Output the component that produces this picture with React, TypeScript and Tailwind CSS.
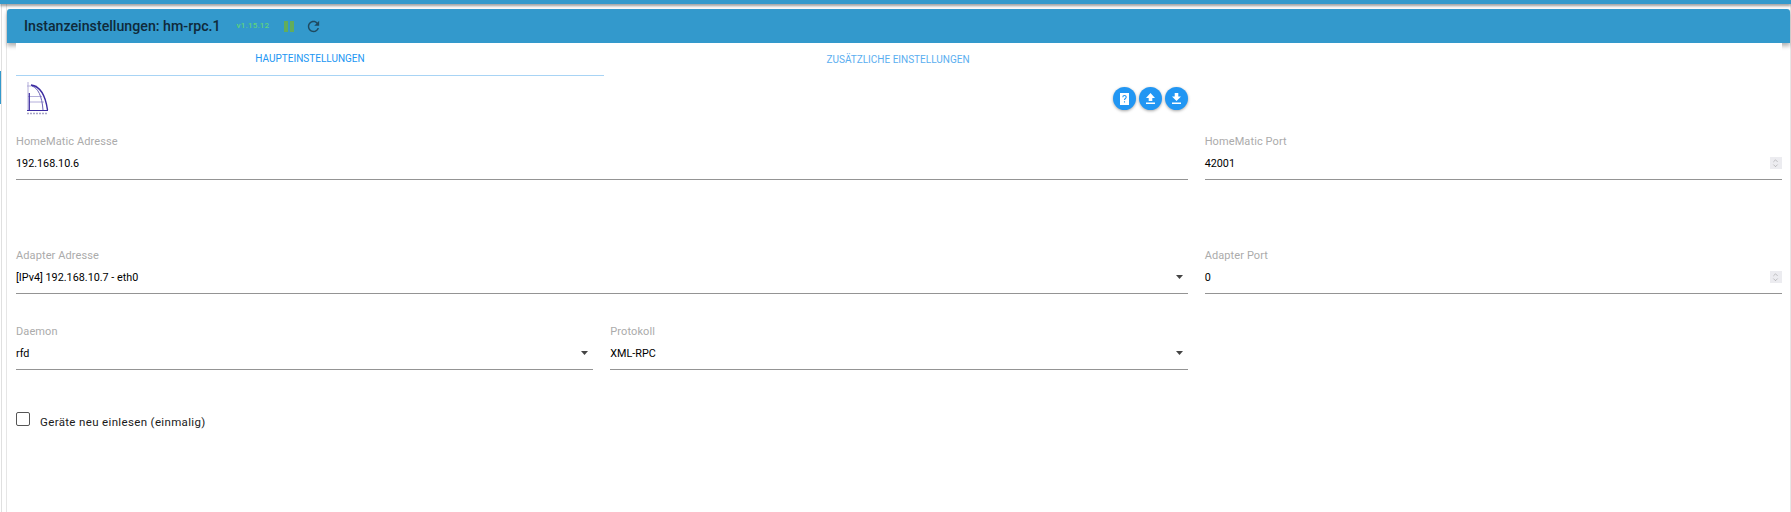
import { ChevronDown, ChevronUp } from 'lucide-react';

const font = { fontFamily: 'Roboto, sans-serif' };

function Caret() {
  return (
    <svg width="7" height="4" viewBox="0 0 7 4" className="absolute right-[5px] top-[5px] text-[#444]">
      <path d="M0 0h7L3.5 4z" fill="currentColor" />
    </svg>
  );
}

function Spinner() {
  return (
    <span className="absolute right-0 top-[1px] flex h-[12px] w-[12px] flex-col items-center justify-center bg-[#ececf0] text-[#777]">
      <ChevronUp size={9} strokeWidth={1.3} className="-mb-[3px]" />
      <ChevronDown size={9} strokeWidth={1.3} />
    </span>
  );
}

function Field({ label, value, select, spin, className }: { label: string; value: string; select?: boolean; spin?: boolean; className?: string }) {
  return (
    <div className={className}>
      <div className="h-[13px] text-[11px] leading-[13px] tracking-[0.1px] text-[#ababab]">{label}</div>
      <div className="relative mt-[8px] h-[24px] border-b border-b-[#949494] text-[10.8px] leading-[15px] text-black">
        {value}
        {select && <Caret />}
        {spin && <Spinner />}
      </div>
    </div>
  );
}

export default function App() {
  return (
    <div className="h-[512px] w-[1791px] overflow-hidden bg-white" style={font}>
      {/* Top bar */}
      <div className="relative z-10 h-[4px] bg-[#3399cc] shadow-[0_2px_3px_rgba(0,0,0,0.4)]" />

      <div className="flex h-[508px]">
        {/* Left rail */}
        <div className="w-[2px] border-r border-r-[#e0e0e0] pt-[67px]">
          <div className="h-[33px] w-[1px] bg-[#3399cc]" />
        </div>

        <div className="ml-[4px] w-[1785px] border-x border-x-[#e6e6e6] pt-[5px]">
          {/* Header */}
          <div className="flex h-[34px] w-[1783px] items-center rounded-t-[3px] bg-[#3399cc] pl-[17px] shadow-[0_3px_4px_rgba(0,0,0,0.3)]">
            <span className="text-[14.2px] font-medium leading-none text-[#0f2a3a]">Instanzeinstellungen: hm-rpc.1</span>
            <span className="ml-[16px] text-[8px] font-medium tracking-[0.2px] text-[#5fd37b]">v1.15.12</span>
            <span className="ml-[15px] flex gap-[2px]">
              <span className="h-[11px] w-[4px] bg-[#62ad5c]" />
              <span className="h-[11px] w-[4px] bg-[#62ad5c]" />
            </span>
            <svg width="17" height="17" viewBox="0 0 24 24" className="ml-[11px] text-[#1f4a60]">
              <path
                fill="currentColor"
                d="M17.65 6.35C16.2 4.9 14.21 4 12 4c-4.42 0-7.99 3.58-7.99 8s3.57 8 7.99 8c3.73 0 6.84-2.55 7.73-6h-2.08c-.82 2.33-3.04 4-5.65 4-3.31 0-6-2.69-6-6s2.69-6 6-6c1.66 0 3.14.69 4.22 1.78L13 11h7V4l-2.35 2.35z"
              />
            </svg>
          </div>

          {/* Card */}
          <div className="relative ml-[9px] h-[469px] w-[1766px] bg-white">
            {/* Tabs */}
            <div className="flex h-[33px] w-[1176px] text-[10px]">
              <div className="flex w-[588px] items-center justify-center border-b border-b-[#a8d4f5] leading-none text-[#2196f3]">HAUPTEINSTELLUNGEN</div>
              <div className="flex w-[588px] items-center justify-center leading-none text-[#5aaef0]">ZUSÄTZLICHE EINSTELLUNGEN</div>
            </div>

            {/* Logo + action buttons */}
            <div className="flex h-[47px] w-[1172px] items-start justify-between">
              <svg width="26" height="36" viewBox="0 0 26 36" className="ml-[8px] mt-[4px]">
                <g fill="none" stroke="#aaa5d6" strokeWidth="0.9">
                  <path d="M4 2v28M3 6h10M4 16.5h14M5 22h15" />
                </g>
                <path d="M8 6c6 2 10 10 11 24" fill="none" stroke="#6a60b8" strokeWidth="1" />
                <path d="M7 5c7 1 14 7 16.5 25" fill="none" stroke="#3a2aa0" strokeWidth="1.4" />
                <path d="M5.3 13v17" stroke="#3a2aa0" strokeWidth="1.2" />
                <path d="M3 30.5h21" stroke="#3a2aa0" strokeWidth="1" />
                <path d="M3 33.5h21" stroke="#a9a6c8" strokeWidth="1.4" strokeDasharray="2 1" />
              </svg>
              <div className="mt-[11px] flex gap-[3px]">
                <span className="flex h-[23px] w-[23px] items-center justify-center rounded-full bg-[#2196f3] shadow-[0_1px_3px_rgba(0,0,0,0.35)]">
                  <svg width="11" height="12" viewBox="0 0 11 12">
                    <path d="M1 0h9v12H1z" fill="#fff" />
                    <path d="M3.8 4.2c0-2.2 3.4-2.2 3.4 0 0 1.3-1.7 1.3-1.7 2.8M5.5 8.2v1.4" fill="none" stroke="#2196f3" strokeWidth="1.1" />
                  </svg>
                </span>
                <span className="flex h-[23px] w-[23px] items-center justify-center rounded-full bg-[#2196f3] shadow-[0_1px_3px_rgba(0,0,0,0.35)]">
                  <svg width="11" height="11" viewBox="0 0 11 11">
                    <path d="M5.5 0 10 5H7.3v3H3.7V5H1zM1 9.5h9V11H1z" fill="#fff" />
                  </svg>
                </span>
                <span className="flex h-[23px] w-[23px] items-center justify-center rounded-full bg-[#2196f3] shadow-[0_1px_3px_rgba(0,0,0,0.35)]">
                  <svg width="11" height="11" viewBox="0 0 11 11">
                    <path d="M3.7 0h3.6v3.5H10L5.5 8 1 3.5h2.7zM1 9.5h9V11H1z" fill="#fff" />
                  </svg>
                </span>
              </div>
            </div>

            {/* Form */}
            <div className="mt-[12px] grid grid-cols-3 gap-x-[17px]">
              <Field className="col-span-2" label="HomeMatic Adresse" value="192.168.10.6" />
              <Field label="HomeMatic Port" value="42001" spin />
              <Field className="col-span-2 mt-[69px]" label="Adapter Adresse" value="[IPv4] 192.168.10.7 - eth0" select />
              <Field className="mt-[69px]" label="Adapter Port" value="0" spin />
              <Field className="mt-[31px]" label="Daemon" value="rfd" select />
              <Field className="mt-[31px]" label="Protokoll" value="XML-RPC" select />
            </div>

            <label className="mt-[42px] flex items-start">
              <span className="h-[14px] w-[14px] rounded-[2px] border-[1.5px] border-[#555]" />
              <span className="ml-[10px] mt-[3px] text-[11.5px] leading-[14px] tracking-[0.35px] text-[#1a1a1a]">Geräte neu einlesen (einmalig)</span>
            </label>
          </div>
        </div>
      </div>
    </div>
  );
}
